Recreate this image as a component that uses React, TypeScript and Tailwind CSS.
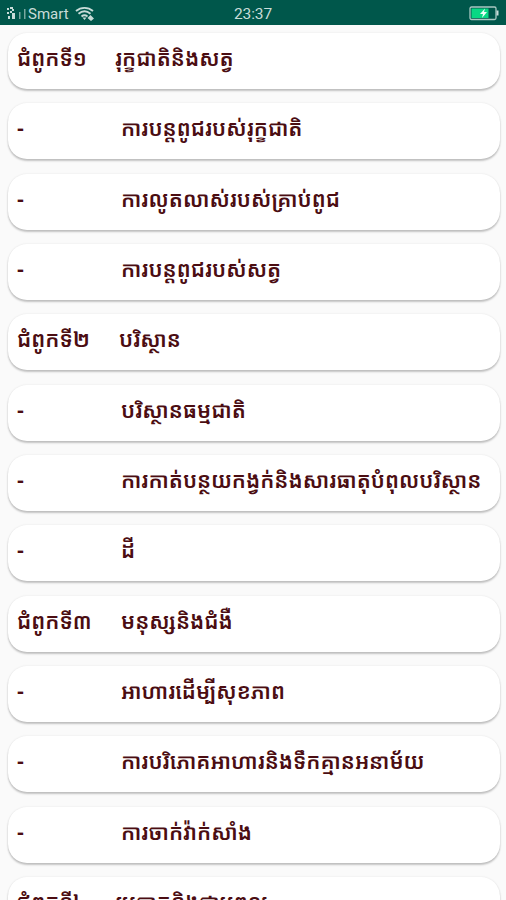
import type { ReactNode } from "react";

type Lesson = {
  chapter?: string;
  title: string;
  // width of the chapter column, the titles do not share one edge
  column: number;
};

const lessons: Lesson[] = [
  { chapter: "ជំពូកទី១", title: "រុក្ខជាតិនិងសត្វ", column: 107 },
  { title: "ការបន្តពូជរបស់រុក្ខជាតិ", column: 113 },
  { title: "ការលូតលាស់របស់គ្រាប់ពូជ", column: 113 },
  { title: "ការបន្តពូជរបស់សត្វ", column: 113 },
  { chapter: "ជំពូកទី២", title: "បរិស្ថាន", column: 111 },
  { title: "បរិស្ថានធម្មជាតិ", column: 113 },
  { title: "ការកាត់បន្ថយកង្វក់និងសារធាតុបំពុលបរិស្ថាន", column: 113 },
  { title: "ដី", column: 113 },
  { chapter: "ជំពូកទី៣", title: "មនុស្សនិងជំងឺ", column: 113 },
  { title: "អាហារដើម្បីសុខភាព", column: 113 },
  { title: "ការបរិភោគអាហារនិងទឹកគ្មានអនាម័យ", column: 113 },
  { title: "ការចាក់វ៉ាក់សាំង", column: 113 },
  { chapter: "ជំពូកទី៤", title: "រូបធាតុនិងថាមពល", column: 107 },
];

function Khmer({ children }: { children: ReactNode }) {
  return (
    <span className="block whitespace-nowrap font-['Noto_Sans_Khmer','Khmer_OS','Noto_Sans','DejaVu_Sans',sans-serif] text-[21.3px] font-semibold leading-[28px] text-[#4b0d12]">
      {children}
    </span>
  );
}

function StatusBar() {
  return (
    <header className="grid h-[25px] shrink-0 grid-cols-[1fr_auto_1fr] items-center bg-[#00574b] px-[7px] pt-[2px] font-[Roboto,sans-serif] text-[#c8dcd8]">
      <div className="flex items-center">
        <svg width="20" height="16" viewBox="0 0 20 16" fill="currentColor">
          <path d="M0 2h2v2H0zM3 1h3v2H3zM5 3h2v2H5zM0 6h2v2H0zM3 5h2v2H3zM1 10h2v3H1zM5 7h3v6H5z" />
          <path opacity="0.6" d="M12 6h1.500v7H12zM17 3h1.500v10H17z" />
        </svg>
        <span className="ml-[1px] text-[15px] leading-4">Smart</span>
        <svg className="ml-[6px]" width="20" height="16" viewBox="0 0 20 16" fill="none" stroke="currentColor" strokeWidth="1.9">
          <path d="M1 5C6 .8 13 .8 18 5M3.500 7.800c4-3.400 8-3.400 12 0M6.500 10.500c2-1.600 4-1.600 6 0" />
          <path fill="currentColor" stroke="none" d="M7.500 11.500h4l-2 2.500zM12.500 12l3-3 3.500 3.500-3 2.500z" />
        </svg>
      </div>
      <span className="text-[15.5px] leading-4 tracking-[-0.1px]">23:37</span>
      <svg className="justify-self-end" width="30" height="15" viewBox="0 0 30 15">
        <rect x="1" y="1" width="26" height="12.500" rx="1.500" fill="none" stroke="#a9c8c2" strokeWidth="1.3" />
        <rect x="2.500" y="2.500" width="17" height="9.500" fill="#08d884" />
        <path d="M28.500 4.500v5" stroke="#c9ddda" strokeWidth="2" />
        <path d="M16 2.500L11 8h3l-1 4 5-6h-3z" fill="#eafff7" />
      </svg>
    </header>
  );
}

export default function App() {
  return (
    <main className="flex h-[900px] w-[506px] flex-col overflow-hidden bg-[#fafafa]">
      <StatusBar />
      <div className="flex flex-col gap-[14.35px] pl-[8px] pr-[6px] pt-[8px]">
        {lessons.map((lesson) => (
          <div
            key={lesson.title}
            className="flex h-[56px] shrink-0 items-center rounded-[19px] bg-white pb-[6px] shadow-[0_2px_2px_rgba(0,0,0,0.22),0_0_2px_rgba(0,0,0,0.1)]"
          >
            <div className="shrink-0 pl-[9px]" style={{ width: lesson.column }}>
              <Khmer>{lesson.chapter ?? "-"}</Khmer>
            </div>
            <Khmer>{lesson.title}</Khmer>
          </div>
        ))}
      </div>
    </main>
  );
}
